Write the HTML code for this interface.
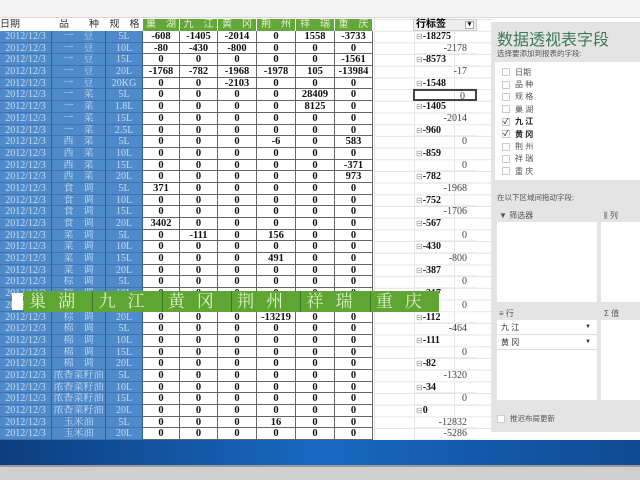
<!DOCTYPE html>
<html><head><meta charset="utf-8"><style>
*{margin:0;padding:0;box-sizing:border-box}
body{width:640px;height:480px;overflow:hidden;background:#fff;position:relative;font-family:"Liberation Serif","Noto Serif CJK SC",serif}
.abs{position:absolute}
#top{left:0;top:0;width:640px;height:18px;background:#f3f3f3;border-bottom:1px solid #d8d8d8}
#grid{left:374px;top:18px;width:118px;height:422px;background-image:linear-gradient(#e4e4e4 1px,transparent 1px),linear-gradient(90deg,#e4e4e4 1px,transparent 1px);background-size:40px 11.7px;background-position:0 1px}
#hdr{left:0;top:19px;height:12px;display:flex;font-size:10px;font-family:"Liberation Sans","Noto Sans CJK SC",sans-serif}
#hdr div{height:12px;line-height:12px;white-space:nowrap;overflow:hidden}
.g{background:#63a73a;color:#e4f3d0;text-align:center;border-right:1px solid #fff}
#rows{left:0;top:31px}
.r{display:flex;height:11.7px;font-size:10px;line-height:11px}
.r div{height:11.7px;overflow:hidden;white-space:nowrap}
.b{background:#4f8bcb;color:#c9dcf0;text-align:center;border-right:1px solid #2d5f99;border-bottom:1px solid #3d73b0;font-family:"Liberation Serif","Noto Serif CJK SC",serif}
.d{text-align:center;border-right:1px solid #666;border-bottom:1px solid #666;color:#111;font-weight:bold;font-size:10.5px}
#piv{left:413px;top:31px;width:64px}
.p{height:11.7px;font-size:10px;line-height:11.7px;border-bottom:1px solid #eee;white-space:nowrap}
.p.h{font-weight:bold;padding-left:3px;color:#111}
.p.h:before{content:"⊟";color:#999;font-weight:normal;font-size:8px}
.p.s{text-align:right;padding-right:10px;color:#444}
#banner{left:24px;top:291px;width:415px;height:21px;background:#5fa534;display:flex}
#banner div{flex:1;color:#dff4c6;font-size:17px;line-height:21px;text-align:center;letter-spacing:12px;border-left:1px solid #3b7a1c;font-family:"Liberation Sans","Noto Serif CJK SC",serif}
#panel{left:491px;top:22px;width:149px;height:410px;background:#e4e4e4;font-family:"Liberation Sans","Noto Sans CJK SC",sans-serif;color:#555}
.cb{display:flex;align-items:center;font-size:8px;height:12.4px;padding-left:7px}
.cb span{width:8px;height:8px;border:1px solid #ccc;background:#fff;margin-right:5px;font-size:8px;line-height:6px;color:#555}
.box{position:absolute;background:#fff}
#bar{left:0;top:440px;width:640px;height:25px;background:linear-gradient(90deg,#0d3e7e,#1868c2 50%,#0f4a92)}
#bot{left:0;top:465px;width:640px;height:15px;background:#cfcfcf;border-top:2px solid #9a9a9a}
</style></head><body>
<div id="top" class="abs"></div>
<div id="grid" class="abs"></div>
<div id="hdr" class="abs">
<div style="width:52px;color:#333">日期</div><div style="width:54px;color:#333;text-align:center">品　　种</div><div style="width:37px;color:#333;text-align:center">规　格</div>
<div class="g" style="width:37px">巢　湖</div><div class="g" style="width:38px">九　江</div><div class="g" style="width:39px">黄　冈</div><div class="g" style="width:39px">荆　州</div><div class="g" style="width:39px">祥　瑞</div><div class="g" style="width:38px">重　庆</div>
</div>
<div id="rows" class="abs">
<div class="r"><div class="b" style="width:52px">2012/12/3</div><div class="b" style="width:54px">一　豆</div><div class="b" style="width:37px">5L</div><div class="d" style="width:37px">-608</div><div class="d" style="width:38px">-1405</div><div class="d" style="width:39px">-2014</div><div class="d" style="width:39px">0</div><div class="d" style="width:39px">1558</div><div class="d" style="width:38px">-3733</div></div>
<div class="r"><div class="b" style="width:52px">2012/12/3</div><div class="b" style="width:54px">一　豆</div><div class="b" style="width:37px">10L</div><div class="d" style="width:37px">-80</div><div class="d" style="width:38px">-430</div><div class="d" style="width:39px">-800</div><div class="d" style="width:39px">0</div><div class="d" style="width:39px">0</div><div class="d" style="width:38px">0</div></div>
<div class="r"><div class="b" style="width:52px">2012/12/3</div><div class="b" style="width:54px">一　豆</div><div class="b" style="width:37px">15L</div><div class="d" style="width:37px">0</div><div class="d" style="width:38px">0</div><div class="d" style="width:39px">0</div><div class="d" style="width:39px">0</div><div class="d" style="width:39px">0</div><div class="d" style="width:38px">-1561</div></div>
<div class="r"><div class="b" style="width:52px">2012/12/3</div><div class="b" style="width:54px">一　豆</div><div class="b" style="width:37px">20L</div><div class="d" style="width:37px">-1768</div><div class="d" style="width:38px">-782</div><div class="d" style="width:39px">-1968</div><div class="d" style="width:39px">-1978</div><div class="d" style="width:39px">105</div><div class="d" style="width:38px">-13984</div></div>
<div class="r"><div class="b" style="width:52px">2012/12/3</div><div class="b" style="width:54px">一　豆</div><div class="b" style="width:37px">20KG</div><div class="d" style="width:37px">0</div><div class="d" style="width:38px">0</div><div class="d" style="width:39px">-2103</div><div class="d" style="width:39px">0</div><div class="d" style="width:39px">0</div><div class="d" style="width:38px">0</div></div>
<div class="r"><div class="b" style="width:52px">2012/12/3</div><div class="b" style="width:54px">一　菜</div><div class="b" style="width:37px">5L</div><div class="d" style="width:37px">0</div><div class="d" style="width:38px">0</div><div class="d" style="width:39px">0</div><div class="d" style="width:39px">0</div><div class="d" style="width:39px">28409</div><div class="d" style="width:38px">0</div></div>
<div class="r"><div class="b" style="width:52px">2012/12/3</div><div class="b" style="width:54px">一　菜</div><div class="b" style="width:37px">1.8L</div><div class="d" style="width:37px">0</div><div class="d" style="width:38px">0</div><div class="d" style="width:39px">0</div><div class="d" style="width:39px">0</div><div class="d" style="width:39px">8125</div><div class="d" style="width:38px">0</div></div>
<div class="r"><div class="b" style="width:52px">2012/12/3</div><div class="b" style="width:54px">一　菜</div><div class="b" style="width:37px">15L</div><div class="d" style="width:37px">0</div><div class="d" style="width:38px">0</div><div class="d" style="width:39px">0</div><div class="d" style="width:39px">0</div><div class="d" style="width:39px">0</div><div class="d" style="width:38px">0</div></div>
<div class="r"><div class="b" style="width:52px">2012/12/3</div><div class="b" style="width:54px">一　菜</div><div class="b" style="width:37px">2.5L</div><div class="d" style="width:37px">0</div><div class="d" style="width:38px">0</div><div class="d" style="width:39px">0</div><div class="d" style="width:39px">0</div><div class="d" style="width:39px">0</div><div class="d" style="width:38px">0</div></div>
<div class="r"><div class="b" style="width:52px">2012/12/3</div><div class="b" style="width:54px">西　菜</div><div class="b" style="width:37px">5L</div><div class="d" style="width:37px">0</div><div class="d" style="width:38px">0</div><div class="d" style="width:39px">0</div><div class="d" style="width:39px">-6</div><div class="d" style="width:39px">0</div><div class="d" style="width:38px">583</div></div>
<div class="r"><div class="b" style="width:52px">2012/12/3</div><div class="b" style="width:54px">西　菜</div><div class="b" style="width:37px">10L</div><div class="d" style="width:37px">0</div><div class="d" style="width:38px">0</div><div class="d" style="width:39px">0</div><div class="d" style="width:39px">0</div><div class="d" style="width:39px">0</div><div class="d" style="width:38px">0</div></div>
<div class="r"><div class="b" style="width:52px">2012/12/3</div><div class="b" style="width:54px">西　菜</div><div class="b" style="width:37px">15L</div><div class="d" style="width:37px">0</div><div class="d" style="width:38px">0</div><div class="d" style="width:39px">0</div><div class="d" style="width:39px">0</div><div class="d" style="width:39px">0</div><div class="d" style="width:38px">-371</div></div>
<div class="r"><div class="b" style="width:52px">2012/12/3</div><div class="b" style="width:54px">西　菜</div><div class="b" style="width:37px">20L</div><div class="d" style="width:37px">0</div><div class="d" style="width:38px">0</div><div class="d" style="width:39px">0</div><div class="d" style="width:39px">0</div><div class="d" style="width:39px">0</div><div class="d" style="width:38px">973</div></div>
<div class="r"><div class="b" style="width:52px">2012/12/3</div><div class="b" style="width:54px">食　调</div><div class="b" style="width:37px">5L</div><div class="d" style="width:37px">371</div><div class="d" style="width:38px">0</div><div class="d" style="width:39px">0</div><div class="d" style="width:39px">0</div><div class="d" style="width:39px">0</div><div class="d" style="width:38px">0</div></div>
<div class="r"><div class="b" style="width:52px">2012/12/3</div><div class="b" style="width:54px">食　调</div><div class="b" style="width:37px">10L</div><div class="d" style="width:37px">0</div><div class="d" style="width:38px">0</div><div class="d" style="width:39px">0</div><div class="d" style="width:39px">0</div><div class="d" style="width:39px">0</div><div class="d" style="width:38px">0</div></div>
<div class="r"><div class="b" style="width:52px">2012/12/3</div><div class="b" style="width:54px">食　调</div><div class="b" style="width:37px">15L</div><div class="d" style="width:37px">0</div><div class="d" style="width:38px">0</div><div class="d" style="width:39px">0</div><div class="d" style="width:39px">0</div><div class="d" style="width:39px">0</div><div class="d" style="width:38px">0</div></div>
<div class="r"><div class="b" style="width:52px">2012/12/3</div><div class="b" style="width:54px">食　调</div><div class="b" style="width:37px">20L</div><div class="d" style="width:37px">3402</div><div class="d" style="width:38px">0</div><div class="d" style="width:39px">0</div><div class="d" style="width:39px">0</div><div class="d" style="width:39px">0</div><div class="d" style="width:38px">0</div></div>
<div class="r"><div class="b" style="width:52px">2012/12/3</div><div class="b" style="width:54px">菜　调</div><div class="b" style="width:37px">5L</div><div class="d" style="width:37px">0</div><div class="d" style="width:38px">-111</div><div class="d" style="width:39px">0</div><div class="d" style="width:39px">156</div><div class="d" style="width:39px">0</div><div class="d" style="width:38px">0</div></div>
<div class="r"><div class="b" style="width:52px">2012/12/3</div><div class="b" style="width:54px">菜　调</div><div class="b" style="width:37px">10L</div><div class="d" style="width:37px">0</div><div class="d" style="width:38px">0</div><div class="d" style="width:39px">0</div><div class="d" style="width:39px">0</div><div class="d" style="width:39px">0</div><div class="d" style="width:38px">0</div></div>
<div class="r"><div class="b" style="width:52px">2012/12/3</div><div class="b" style="width:54px">菜　调</div><div class="b" style="width:37px">15L</div><div class="d" style="width:37px">0</div><div class="d" style="width:38px">0</div><div class="d" style="width:39px">0</div><div class="d" style="width:39px">491</div><div class="d" style="width:39px">0</div><div class="d" style="width:38px">0</div></div>
<div class="r"><div class="b" style="width:52px">2012/12/3</div><div class="b" style="width:54px">菜　调</div><div class="b" style="width:37px">20L</div><div class="d" style="width:37px">0</div><div class="d" style="width:38px">0</div><div class="d" style="width:39px">0</div><div class="d" style="width:39px">0</div><div class="d" style="width:39px">0</div><div class="d" style="width:38px">0</div></div>
<div class="r"><div class="b" style="width:52px">2012/12/3</div><div class="b" style="width:54px">棕　调</div><div class="b" style="width:37px">5L</div><div class="d" style="width:37px">0</div><div class="d" style="width:38px">0</div><div class="d" style="width:39px">0</div><div class="d" style="width:39px">0</div><div class="d" style="width:39px">0</div><div class="d" style="width:38px">0</div></div>
<div class="r"><div class="b" style="width:52px">2012/12/3</div><div class="b" style="width:54px">棕　调</div><div class="b" style="width:37px">10L</div><div class="d" style="width:37px">0</div><div class="d" style="width:38px">0</div><div class="d" style="width:39px">0</div><div class="d" style="width:39px">0</div><div class="d" style="width:39px">0</div><div class="d" style="width:38px">0</div></div>
<div class="r"><div class="b" style="width:52px">2012/12/3</div><div class="b" style="width:54px">棕　调</div><div class="b" style="width:37px">15L</div><div class="d" style="width:37px">0</div><div class="d" style="width:38px">0</div><div class="d" style="width:39px">0</div><div class="d" style="width:39px">0</div><div class="d" style="width:39px">0</div><div class="d" style="width:38px">0</div></div>
<div class="r"><div class="b" style="width:52px">2012/12/3</div><div class="b" style="width:54px">棕　调</div><div class="b" style="width:37px">20L</div><div class="d" style="width:37px">0</div><div class="d" style="width:38px">0</div><div class="d" style="width:39px">0</div><div class="d" style="width:39px">-13219</div><div class="d" style="width:39px">0</div><div class="d" style="width:38px">0</div></div>
<div class="r"><div class="b" style="width:52px">2012/12/3</div><div class="b" style="width:54px">棉　调</div><div class="b" style="width:37px">5L</div><div class="d" style="width:37px">0</div><div class="d" style="width:38px">0</div><div class="d" style="width:39px">0</div><div class="d" style="width:39px">0</div><div class="d" style="width:39px">0</div><div class="d" style="width:38px">0</div></div>
<div class="r"><div class="b" style="width:52px">2012/12/3</div><div class="b" style="width:54px">棉　调</div><div class="b" style="width:37px">10L</div><div class="d" style="width:37px">0</div><div class="d" style="width:38px">0</div><div class="d" style="width:39px">0</div><div class="d" style="width:39px">0</div><div class="d" style="width:39px">0</div><div class="d" style="width:38px">0</div></div>
<div class="r"><div class="b" style="width:52px">2012/12/3</div><div class="b" style="width:54px">棉　调</div><div class="b" style="width:37px">15L</div><div class="d" style="width:37px">0</div><div class="d" style="width:38px">0</div><div class="d" style="width:39px">0</div><div class="d" style="width:39px">0</div><div class="d" style="width:39px">0</div><div class="d" style="width:38px">0</div></div>
<div class="r"><div class="b" style="width:52px">2012/12/3</div><div class="b" style="width:54px">棉　调</div><div class="b" style="width:37px">20L</div><div class="d" style="width:37px">0</div><div class="d" style="width:38px">0</div><div class="d" style="width:39px">0</div><div class="d" style="width:39px">0</div><div class="d" style="width:39px">0</div><div class="d" style="width:38px">0</div></div>
<div class="r"><div class="b" style="width:52px">2012/12/3</div><div class="b" style="width:54px">浓香菜籽油</div><div class="b" style="width:37px">5L</div><div class="d" style="width:37px">0</div><div class="d" style="width:38px">0</div><div class="d" style="width:39px">0</div><div class="d" style="width:39px">0</div><div class="d" style="width:39px">0</div><div class="d" style="width:38px">0</div></div>
<div class="r"><div class="b" style="width:52px">2012/12/3</div><div class="b" style="width:54px">浓香菜籽油</div><div class="b" style="width:37px">10L</div><div class="d" style="width:37px">0</div><div class="d" style="width:38px">0</div><div class="d" style="width:39px">0</div><div class="d" style="width:39px">0</div><div class="d" style="width:39px">0</div><div class="d" style="width:38px">0</div></div>
<div class="r"><div class="b" style="width:52px">2012/12/3</div><div class="b" style="width:54px">浓香菜籽油</div><div class="b" style="width:37px">15L</div><div class="d" style="width:37px">0</div><div class="d" style="width:38px">0</div><div class="d" style="width:39px">0</div><div class="d" style="width:39px">0</div><div class="d" style="width:39px">0</div><div class="d" style="width:38px">0</div></div>
<div class="r"><div class="b" style="width:52px">2012/12/3</div><div class="b" style="width:54px">浓香菜籽油</div><div class="b" style="width:37px">20L</div><div class="d" style="width:37px">0</div><div class="d" style="width:38px">0</div><div class="d" style="width:39px">0</div><div class="d" style="width:39px">0</div><div class="d" style="width:39px">0</div><div class="d" style="width:38px">0</div></div>
<div class="r"><div class="b" style="width:52px">2012/12/3</div><div class="b" style="width:54px">玉米油</div><div class="b" style="width:37px">5L</div><div class="d" style="width:37px">0</div><div class="d" style="width:38px">0</div><div class="d" style="width:39px">0</div><div class="d" style="width:39px">16</div><div class="d" style="width:39px">0</div><div class="d" style="width:38px">0</div></div>
<div class="r"><div class="b" style="width:52px">2012/12/3</div><div class="b" style="width:54px">玉米油</div><div class="b" style="width:37px">20L</div><div class="d" style="width:37px">0</div><div class="d" style="width:38px">0</div><div class="d" style="width:39px">0</div><div class="d" style="width:39px">0</div><div class="d" style="width:39px">0</div><div class="d" style="width:38px">0</div></div>
</div>
<div class="abs" style="left:413px;top:19px;width:64px;height:12px;background:#eee;border:1px solid #ccc;font-size:10px;line-height:10px;font-weight:bold;font-family:'Liberation Sans','Noto Sans CJK SC',sans-serif;padding-left:2px">行标签<span style="position:absolute;right:2px;top:1px;font-size:7px;border:1px solid #aaa;background:#fff;width:9px;height:8px;text-align:center;line-height:6px">▾</span></div>
<div id="piv" class="abs">
<div class="p h">-18275</div><div class="p s">-2178</div><div class="p h">-8573</div><div class="p s">-17</div><div class="p h">-1548</div><div class="p s" style="border:2px solid #444">0</div><div class="p h">-1405</div><div class="p s">-2014</div><div class="p h">-960</div><div class="p s">0</div><div class="p h">-859</div><div class="p s">0</div><div class="p h">-782</div><div class="p s">-1968</div><div class="p h">-752</div><div class="p s">-1706</div><div class="p h">-567</div><div class="p s">0</div><div class="p h">-430</div><div class="p s">-800</div><div class="p h">-387</div><div class="p s">0</div><div class="p h">-317</div><div class="p s">0</div><div class="p h">-112</div><div class="p s">-464</div><div class="p h">-111</div><div class="p s">0</div><div class="p h">-82</div><div class="p s">-1320</div><div class="p h">-34</div><div class="p s">0</div><div class="p h">0</div><div class="p s">-12832</div><div class="p s">-5286</div>
</div>
<div class="abs" style="left:12px;top:293px;width:11px;height:17px;background:#fff"></div>
<div id="banner" class="abs"><div style="border-left:none">巢湖</div><div>九江</div><div>黄冈</div><div>荆州</div><div>祥瑞</div><div>重庆</div></div>
<div id="panel" class="abs">
<div style="position:absolute;left:6px;top:4px;font-size:16px;color:#3c7a5a">数据透视表字段</div>
<div style="position:absolute;left:6px;top:26px;font-size:7.5px">选择要添加到报表的字段:</div>
<div class="box" style="left:4px;top:40px;width:145px;height:118px;padding-top:4px">
<div class="cb"><span></span>日期</div><div class="cb"><span></span>品 种</div><div class="cb"><span></span>规 格</div><div class="cb"><span></span>巢 湖</div><div class="cb" style="font-weight:bold;color:#222"><span>✓</span>九 江</div><div class="cb" style="font-weight:bold;color:#222"><span>✓</span>黄 冈</div><div class="cb"><span></span>荆 州</div><div class="cb"><span></span>祥 瑞</div><div class="cb"><span></span>重 庆</div>
</div>
<div style="position:absolute;left:6px;top:170px;font-size:7.5px">在以下区域间拖动字段:</div>
<div style="position:absolute;left:8px;top:188px;font-size:8px">▼ 筛选器</div>
<div style="position:absolute;left:113px;top:188px;font-size:8px">⫼ 列</div>
<div class="box" style="left:6px;top:200px;width:100px;height:80px"></div>
<div class="box" style="left:110px;top:200px;width:39px;height:80px"></div>
<div style="position:absolute;left:8px;top:286px;font-size:8px">≡ 行</div>
<div style="position:absolute;left:113px;top:286px;font-size:8px">Σ 值</div>
<div class="box" style="left:6px;top:298px;width:100px;height:80px;font-size:8px;color:#333">
<div style="height:15px;line-height:15px;padding-left:4px;border-bottom:1px solid #ddd">九 江<span style="float:right;margin-right:6px;font-size:6px">▼</span></div>
<div style="height:15px;line-height:15px;padding-left:4px;border-bottom:1px solid #ddd">黄 冈<span style="float:right;margin-right:6px;font-size:6px">▼</span></div>
</div>
<div class="box" style="left:110px;top:298px;width:39px;height:80px"></div>
<div style="position:absolute;left:6px;top:391px;font-size:7.5px;display:flex;align-items:center"><span style="display:inline-block;width:8px;height:8px;background:#fff;border:1px solid #ccc;margin-right:5px"></span>推迟布局更新</div>
</div>
<div id="bar" class="abs"></div>
<div id="bot" class="abs"></div>
</body></html>
